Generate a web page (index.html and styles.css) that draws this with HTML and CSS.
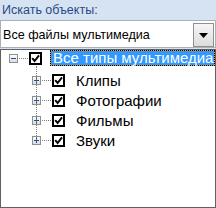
FILE: index.html
```html
<!DOCTYPE html>
<html lang="ru">
<head>
<meta charset="utf-8">
<link rel="stylesheet" href="styles.css">
</head>
<body>
<div class="label">Искать объекты:</div>
<div class="combo">
  <span class="combo-text">Все файлы мультимедиа</span>
  <span class="combo-btn">
    <svg width="9" height="5" viewBox="0 0 9 5"><polygon points="0,0 9,0 4.5,5" fill="#000"/></svg>
  </span>
</div>
<div class="tree">
  <div class="row root">
    <svg class="exp" width="9" height="9" viewBox="0 0 9 9">
      <defs><linearGradient id="g1" x1="0" y1="0" x2="0" y2="1"><stop offset="0" stop-color="#ffffff"/><stop offset="1" stop-color="#d9d9d9"/></linearGradient></defs>
      <rect x="0.5" y="0.5" width="8" height="8" fill="url(#g1)" stroke="#8e8f8f"/>
      <line x1="2" y1="4.5" x2="7" y2="4.5" stroke="#1f4e9e"/>
    </svg>
    <span class="hline"></span>
    <svg class="chk" width="13" height="13" viewBox="0 0 13 13"><rect x="1" y="1" width="11" height="11" fill="#fff" stroke="#000" stroke-width="2"/><path d="M3.2 6.2 L5.6 9 L10 3.4" fill="none" stroke="#000" stroke-width="2"/></svg>
    <span class="sel"><span class="sel-in">Все типы мультимедиа</span></span>
  </div>
  <div class="children">
    <div class="row child">
      <svg class="exp" width="9" height="9" viewBox="0 0 9 9"><rect x="0.5" y="0.5" width="8" height="8" fill="url(#g1)" stroke="#8e8f8f"/><line x1="2" y1="4.5" x2="7" y2="4.5" stroke="#1f4e9e"/><line x1="4.5" y1="2" x2="4.5" y2="7" stroke="#1f4e9e"/></svg>
      <span class="hline"></span>
      <svg class="chk" width="13" height="13" viewBox="0 0 13 13"><rect x="1" y="1" width="11" height="11" fill="#fff" stroke="#000" stroke-width="2"/><path d="M3.2 6.2 L5.6 9 L10 3.4" fill="none" stroke="#000" stroke-width="2"/></svg>
      <span class="txt">Клипы</span>
    </div>
    <div class="row child">
      <svg class="exp" width="9" height="9" viewBox="0 0 9 9"><rect x="0.5" y="0.5" width="8" height="8" fill="url(#g1)" stroke="#8e8f8f"/><line x1="2" y1="4.5" x2="7" y2="4.5" stroke="#1f4e9e"/><line x1="4.5" y1="2" x2="4.5" y2="7" stroke="#1f4e9e"/></svg>
      <span class="hline"></span>
      <svg class="chk" width="13" height="13" viewBox="0 0 13 13"><rect x="1" y="1" width="11" height="11" fill="#fff" stroke="#000" stroke-width="2"/><path d="M3.2 6.2 L5.6 9 L10 3.4" fill="none" stroke="#000" stroke-width="2"/></svg>
      <span class="txt">Фотографии</span>
    </div>
    <div class="row child">
      <svg class="exp" width="9" height="9" viewBox="0 0 9 9"><rect x="0.5" y="0.5" width="8" height="8" fill="url(#g1)" stroke="#8e8f8f"/><line x1="2" y1="4.5" x2="7" y2="4.5" stroke="#1f4e9e"/><line x1="4.5" y1="2" x2="4.5" y2="7" stroke="#1f4e9e"/></svg>
      <span class="hline"></span>
      <svg class="chk" width="13" height="13" viewBox="0 0 13 13"><rect x="1" y="1" width="11" height="11" fill="#fff" stroke="#000" stroke-width="2"/><path d="M3.2 6.2 L5.6 9 L10 3.4" fill="none" stroke="#000" stroke-width="2"/></svg>
      <span class="txt">Фильмы</span>
    </div>
    <div class="row child">
      <svg class="exp" width="9" height="9" viewBox="0 0 9 9"><rect x="0.5" y="0.5" width="8" height="8" fill="url(#g1)" stroke="#8e8f8f"/><line x1="2" y1="4.5" x2="7" y2="4.5" stroke="#1f4e9e"/><line x1="4.5" y1="2" x2="4.5" y2="7" stroke="#1f4e9e"/></svg>
      <span class="hline"></span>
      <svg class="chk" width="13" height="13" viewBox="0 0 13 13"><rect x="1" y="1" width="11" height="11" fill="#fff" stroke="#000" stroke-width="2"/><path d="M3.2 6.2 L5.6 9 L10 3.4" fill="none" stroke="#000" stroke-width="2"/></svg>
      <span class="txt">Звуки</span>
    </div>
  </div>
</div>
</body>
</html>
```

FILE: styles.css
```css
html, body {
  margin: 0;
  padding: 0;
}
body {
  width: 216px;
  height: 208px;
  background: #d6e3f3;
  font-family: "Liberation Sans", Arial, sans-serif;
  overflow: hidden;
}
.label {
  height: 16px;
  padding: 2px 0 2px 2px;
  font-size: 12.5px;
  line-height: 16px;
  color: #2b4a86;
}
.combo {
  box-sizing: border-box;
  height: 28px;
  width: 216px;
  background: #fff;
  border: 1px solid #a9b1bb;
  display: flex;
  align-items: center;
  padding-left: 2px;
  padding-right: 1px;
}
.combo-text {
  flex: 1;
  font-size: 12.6px;
  color: #000;
  padding-top: 1px;
}
.combo-btn {
  box-sizing: border-box;
  width: 21px;
  height: 24px;
  border: 1px solid #8f8f8f;
  background: linear-gradient(#f6f6f6, #dcdcdc);
  display: flex;
  align-items: center;
  justify-content: center;
  margin-top: 2px;
}
.combo-btn svg {
  display: block;
}
.tree {
  box-sizing: border-box;
  margin-top: 1px;
  height: 159px;
  width: 216px;
  background: #fff;
  border: 1px solid #606060;
}
.row {
  display: flex;
  align-items: center;
}
.row svg {
  display: block;
  flex: none;
}
.root {
  height: 16px;
  padding-left: 8px;
  margin-bottom: 4px;
}
.child {
  height: 20px;
  padding-left: 31px;
}
.hline {
  width: 9px;
  margin: 0 1px;
  border-top: 1px dotted #808080;
  flex: none;
}
.chk {
  margin-right: 8px;
}
.sel {
  flex: 1;
  border: 1px dotted #000;
  background: #f09a2a;
  height: 14px;
  display: flex;
}
.sel-in {
  flex: 1;
  background: #3399ff;
  color: #fff;
  font-size: 15px;
  line-height: 14px;
  padding-left: 2px;
  white-space: nowrap;
}
.txt {
  font-size: 15px;
  color: #000;
  padding-left: 3px;
  white-space: nowrap;
}
.children {
  position: relative;
}
.children::before {
  content: "";
  position: absolute;
  left: 35px;
  top: -4px;
  bottom: 10px;
  border-left: 1px dotted #808080;
}
```
